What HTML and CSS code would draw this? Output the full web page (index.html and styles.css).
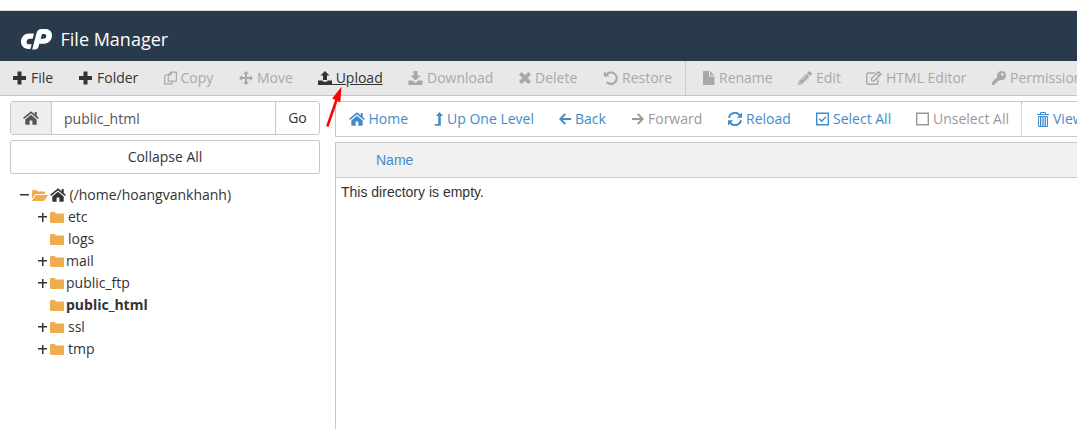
FILE: index.html
```html
<!DOCTYPE html>
<html lang="en">
<head>
<meta charset="utf-8">
<title>File Manager</title>
<link rel="stylesheet" href="styles.css">
</head>
<body>
<svg class="sprite" aria-hidden="true">
<symbol id="plus" viewBox="0 0 13 13"><path d="M4.500 0h4v4.500H13v4H8.500V13h-4V8.500H0v-4h4.500z"/></symbol>
<symbol id="copy" viewBox="0 0 14 14"><path d="M4.600 3.500 7.500.7h5.800v9.700H4.600zM7.700.8v2.900H4.700M4.600 3.500H1.900L.7 5v8.400h7.800v-3" fill="none" stroke="currentColor" stroke-width="1.300"/></symbol>
<symbol id="move" viewBox="0 0 14 14"><path d="m7 0 3 3H8v3h3V4l3 3-3 3V8H8v3h2l-3 3-3-3h2V8H3v2L0 7l3-3v2h3V3H4z"/></symbol>
<symbol id="upload" viewBox="0 0 14 14"><path d="M7 0 11.500 4.500H9V9H5V4.500H2.500zM0 9.500h4.200c.4 1 1.200 1.300 2.800 1.300s2.400-.3 2.800-1.300H14V14H0z"/></symbol>
<symbol id="download" viewBox="0 0 14 14"><path d="M5 0h4v4.500h3L7 9.500 2 4.500h3zM0 9.500h3.900L7 12l3.100-2.500H14V14H0z"/></symbol>
<symbol id="delete" viewBox="0 0 12 12"><path d="M0 2.700 2.700 0 6 3.300 9.300 0 12 2.700 8.700 6 12 9.300 9.300 12 6 8.700 2.700 12 0 9.300 3.300 6z"/></symbol>
<symbol id="restore" viewBox="0 0 14 14"><path d="M2 4.500A5.700 5.700 0 1 1 2.800 11" fill="none" stroke="currentColor" stroke-width="2.100"/><path d="M0 .3 5.500 5.600H0z"/></symbol>
<symbol id="doc" viewBox="0 0 12 14"><path d="M0 .8Q0 0 .8 0H6v5.500h5.500v7.700q0 .8-.8.8H.8Q0 14 0 13.200zM7 0l4.500 4.500H7z"/></symbol>
<symbol id="pencil" viewBox="0 0 14 14"><path d="M10.600.5q.7-.7 1.400 0l1.600 1.600q.7.700 0 1.400L12 5 9 2zM8.300 2.700l3 3-7.500 7.500L0 14l.8-3.800zM1.600 10.700l-.3 1.900 1.900-.3zM3.500 9l.4.400 4.700-4.700-.4-.4z" fill-rule="evenodd"/></symbol>
<symbol id="edit" viewBox="0 0 16 14"><path d="M9 2H2.200Q.7 2 .7 3.500v8.300q0 1.500 1.500 1.500h8.300q1.500 0 1.500-1.500V8.600" fill="none" stroke="currentColor" stroke-width="1.400"/><path d="m5 7 6.800-6.700q.6-.6 1.200 0l2.400 2.300q.5.500 0 1.100L8.700 10.500H5zm1.200.7v1.500h1.500l4.100-4-1.600-1.600zM11 2.800l1.600 1.600.9-.9-1.600-1.600z" fill-rule="evenodd"/></symbol>
<symbol id="key" viewBox="0 0 14 14"><path d="M9.500 0A4.500 4.500 0 1 1 8 8.700L6.800 9.900H5.500v1.400H4.200v1.300H2.800V14H0v-2.800l5.300-5.300A4.500 4.500 0 0 1 9.500 0zm.9 2.100a1.350 1.350 0 1 0 0 2.700 1.350 1.350 0 0 0 0-2.700z" fill-rule="evenodd"/></symbol>
<symbol id="home" viewBox="0 0 16 14"><path d="M8 3.700 13.700 8.400V13q0 .7-.7.700H9.400V9.500H6.600v4.200H3q-.7 0-.7-.7V8.400z"/><path d="M.6 7.400 8 1.300l7.400 6.100" fill="none" stroke="currentColor" stroke-width="1.500"/><path d="M11.700 1h2v4.300l-2-1.600z"/></symbol>
<symbol id="up" viewBox="0 0 9 14"><path d="m5.500 0 3.500 4H6.800v9.800H1.500L0 12h4.200V4H2z"/></symbol>
<symbol id="back" viewBox="0 0 12 12"><path d="M6.300.9 1.300 6l5 5.100M1.300 6H12" fill="none" stroke="currentColor" stroke-width="2"/></symbol>
<symbol id="forward" viewBox="0 0 12 12"><path d="m5.700.9 5 5.100-5 5.100M10.700 6H0" fill="none" stroke="currentColor" stroke-width="2"/></symbol>
<symbol id="reload" viewBox="0 0 14 14"><path d="M1 5.700A6.100 6.100 0 0 1 11.900 3.400M13 8.300A6.100 6.100 0 0 1 2.100 10.600" fill="none" stroke="currentColor" stroke-width="2"/><path d="M14 .5v5.200H8.800zM0 13.500V8.300h5.200z"/></symbol>
<symbol id="checked" viewBox="0 0 13 13"><path d="M.7.700h11.600v11.600H.7zM3.300 6.200l2.300 2.500 4.300-4.500" fill="none" stroke="currentColor" stroke-width="1.400"/></symbol>
<symbol id="unchecked" viewBox="0 0 13 13"><path d="M.7.700h11.600v11.600H.7z" fill="none" stroke="currentColor" stroke-width="1.400"/></symbol>
<symbol id="trash" viewBox="0 0 12 15"><path d="M0 2.500h12M3.500 2.500v-2h5v2M1.500 4.500h9v10h-9zM3.500 5v9M5.200 5v9M6.900 5v9M8.600 5v9" fill="none" stroke="currentColor"/></symbol>
<symbol id="folder" viewBox="0 0 14 11"><path d="M0 1.200Q0 0 1.200 0h3.200q1 0 1.300 1.500h7q1.300 0 1.300 1.200v7q0 1.300-1.300 1.300H1.300Q0 11 0 9.700z"/></symbol>
<symbol id="open" viewBox="0 0 16 11"><path d="M0 9V1Q0 0 1.200 0h3q1 0 1.300 1.500H12q1 0 1 1V4H4.600q-1.400 0-2.200 1.200z"/><path d="M4.500 5h11q.7 0 .3.700l-3 4.300q-.7 1-1.600 1H.7q-.8 0-.3-.8L3 6q.6-1 1.500-1z"/></symbol>
</svg>
<header class="masthead">
<svg class="logo" viewBox="0 0 31 21"><path d="M13 4.500H8.200C3.600 4.500 0 8 0 12.600 0 16.800 3 20 7.100 20h2.300l1.300-4.800H7.900c-1.400 0-2.300-.9-2.300-2.300 0-1.800 1.200-3.200 3-3.200h3zM11.200 20.500 15.600 3.800C16.300 1.300 18 0 20.500 0h3.700C28.300 0 31 2.500 31 6.200c0 4.800-3.300 8.500-8 8.500h-4.600l1.300-4.900h2.900c1.600 0 2.700-1.100 2.700-2.700 0-1.300-.8-2.200-2.100-2.200h-1.500c-.5 0-.8.2-.9.700L17.500 17.800c-.5 1.800-1.700 2.700-3.500 2.700z"/></svg>
<span>File Manager</span>
</header>
<nav class="toolbar">
<a class="item new"><svg class="i13"><use href="#plus"/></svg>File</a>
<a class="item new"><svg class="i13"><use href="#plus"/></svg>Folder</a>
<a class="item off copy"><svg class="i13"><use href="#copy"/></svg>Copy</a>
<a class="item off"><svg><use href="#move"/></svg>Move</a>
<a class="item upload"><svg><use href="#upload"/></svg><span>&nbsp;Upload</span></a>
<a class="item off"><svg class="i15"><use href="#download"/></svg>Download</a>
<a class="item off"><svg class="i12"><use href="#delete"/></svg>Delete</a>
<a class="item off last"><svg><use href="#restore"/></svg>Restore</a>
<a class="item off rename"><svg class="i12"><use href="#doc"/></svg>Rename</a>
<a class="item off"><svg><use href="#pencil"/></svg>Edit</a>
<a class="item off"><svg class="i16"><use href="#edit"/></svg>HTML Editor</a>
<a class="item off"><svg><use href="#key"/></svg>Permissions</a>
</nav>
<main class="content">
<aside class="sidebar">
<div class="search"><span class="addon"><svg class="i16"><use href="#home"/></svg></span><span class="path">public_html</span><span class="go">Go</span></div>
<div class="collapse">Collapse All</div>
<div class="tree">
<div class="row root"><b class="toggle minus"></b><svg class="i16 gold"><use href="#open"/></svg><svg class="i16 house"><use href="#home"/></svg><span>(/home/hoangvankhanh)</span></div>
<div class="row"><b class="toggle plus"></b><svg class="gold"><use href="#folder"/></svg><span class="wide">etc</span></div>
<div class="row"><b class="toggle"></b><svg class="gold"><use href="#folder"/></svg><span class="wide">logs</span></div>
<div class="row"><b class="toggle plus"></b><svg class="gold"><use href="#folder"/></svg><span>mail</span></div>
<div class="row"><b class="toggle plus"></b><svg class="gold"><use href="#folder"/></svg><span>public_ftp</span></div>
<div class="row current"><b class="toggle"></b><svg class="gold"><use href="#folder"/></svg><span>public_html</span></div>
<div class="row"><b class="toggle plus"></b><svg class="gold"><use href="#folder"/></svg><span class="wide">ssl</span></div>
<div class="row"><b class="toggle plus"></b><svg class="gold"><use href="#folder"/></svg><span class="wide">tmp</span></div>
</div>
</aside>
<section class="files">
<nav class="actions">
<a class="item"><svg class="i16"><use href="#home"/></svg>Home</a>
<a class="item"><svg class="i9"><use href="#up"/></svg>Up One Level</a>
<a class="item"><svg class="i12"><use href="#back"/></svg>Back</a>
<a class="item off"><svg class="i12"><use href="#forward"/></svg>Forward</a>
<a class="item"><svg><use href="#reload"/></svg>Reload</a>
<a class="item"><svg class="i13"><use href="#checked"/></svg>Select All</a>
<a class="item off last"><svg class="i13"><use href="#unchecked"/></svg>Unselect All</a>
<a class="item trash"><svg class="i12"><use href="#trash"/></svg>View Trash</a>
</nav>
<div class="table"><div class="thead">Name</div><div class="empty">This directory is empty.</div></div>
</section>
</main>
<svg class="pointer" viewBox="0 0 20 44"><path d="M2.300 40.500 11.500 14" stroke="red" stroke-width="2.600"/><path d="M16.500.7 15.300 16.200 7.200 12.500z" fill="red"/></svg>
</body>
</html>
```
FILE: styles.css
```css
* { box-sizing: border-box; }
body { margin: 0; height: 429px; overflow: hidden; padding-top: 10px; background: #fff; color: #333; font: 14px/20px "Open Sans", sans-serif; position: relative; display: flex; flex-direction: column; }
.sprite { position: absolute; width: 0; height: 0; }
svg { fill: currentColor; width: 14px; height: 14px; flex: none; }
.i9 { width: 9px; }
.i12 { width: 12px; }
.i13 { width: 13px; }
.i15 { width: 15px; }
.i16 { width: 16px; }
.masthead { flex: none; height: 51px; border-top: 1px solid #d8dcdf; background: #293a4a; color: #fff; display: flex; align-items: center; padding: 6px 0 0 21px; font-size: 18px; }
.logo { width: 31px; height: 21px; margin-right: 8.500px; }
.toolbar { flex: none; height: 35px; background: #e8e8e8; border-bottom: 1px solid #c7c7c7; display: grid; grid-template-columns: 66px 85px 75px 79px 90px 111px 85px 95px 99px 68px 126px 120px; overflow: hidden; }
.item { display: flex; align-items: center; gap: 4px; padding-left: 13px; white-space: nowrap; }
.new { gap: 5px; }
.toolbar .off { color: #a8a8a8; }
.copy { gap: 3.500px; }
.toolbar .last { border-right: 1px dotted #b8b8b8; }
.toolbar .rename { padding-left: 17px; }
.upload { text-decoration: underline; gap: 0; }
.content { flex: 1; display: flex; min-height: 0; }
.sidebar { width: 320px; padding: 5px 0 0 10px; flex: none; }
.search { height: 34px; border: 1px solid #c8c8c8; border-radius: 3px; display: flex; line-height: 34px; }
.addon { width: 41px; background: #eee; border-right: 1px solid #c8c8c8; color: #555; display: flex; align-items: center; justify-content: center; }
.path { flex: 1; padding-left: 12px; color: #555; }
.go { width: 44px; border-left: 1px solid #c8c8c8; text-align: center; line-height: 32px; }
.collapse { height: 34px; margin-top: 5px; border: 1px solid #c8c8c8; border-radius: 2px; text-align: center; line-height: 32px; }
.tree { padding: 10px 0 0 28px; }
.row { display: flex; align-items: center; height: 22px; }
.root { margin-left: -18px; }
.gold { color: #f0ad4e; height: 11px; }
.toggle { width: 9px; height: 9px; margin-right: 3px; }
.minus { background: linear-gradient(#333, #333) center / 9px 1.500px no-repeat; }
.plus { background: linear-gradient(#333, #333) center / 9px 1.500px no-repeat, linear-gradient(#333, #333) center / 1.500px 9px no-repeat; }
.row span { margin-left: 2px; }
.row .wide { margin-left: 4px; }
.root .house { margin-left: 2px; }
.root span { margin-left: 3.500px; }
.current { font-weight: 700; }
.files { flex: 1; min-width: 0; margin-left: 15px; padding-top: 5px; display: flex; flex-direction: column; }
.actions { height: 36px; flex: none; border: 1px solid #c8c8c8; border-right: 0; display: grid; grid-template-columns: 85px 125px 73px 96px 88px 100px 119px 120px; overflow: hidden; color: #428bca; }
.actions .item:first-child { gap: 3.500px; }
.actions .off { color: #999; }
.actions .last { border-right: 1px dotted #b8b8b8; }
.actions .trash { padding-left: 15px; }
.trash svg { height: 15px; }
.table { flex: 1; margin-top: 5px; border: solid #c8c8c8; border-width: 1px 0 0 1px; font-family: "Liberation Sans", Arial, sans-serif; }
.thead { height: 35px; border-bottom: 1px solid #c8c8c8; background: #f1f1f1; color: #428bca; padding-left: 40px; line-height: 34px; }
.empty { padding: 4px 5px; }
.pointer { position: absolute; left: 325px; top: 86px; width: 20px; height: 44px; }
```
